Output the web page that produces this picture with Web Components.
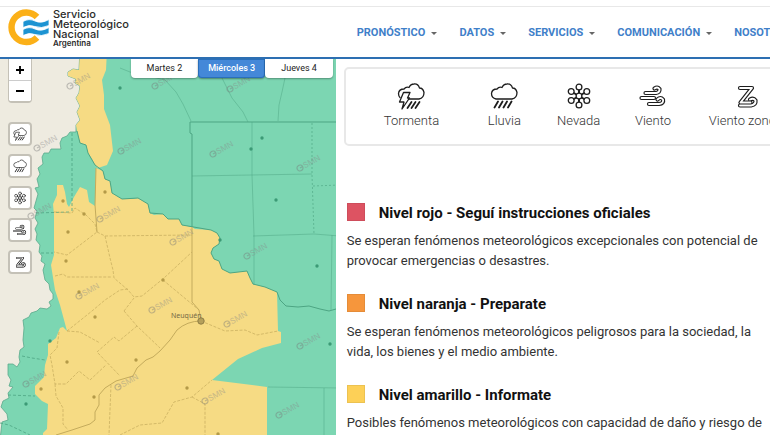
<!DOCTYPE html>
<html lang="es">
<head>
<meta charset="utf-8">
<title>Servicio Meteorológico Nacional</title>
<style>
body{margin:0;background:#fff;font-family:Roboto,"Liberation Sans",sans-serif;color:#333}
</style>
</head>
<body>
<smn-page></smn-page>
<script>
const define = (name, html, setup) => {
  const t = document.createElement('template');
  t.innerHTML = html;
  customElements.define(name, class extends HTMLElement {
    connectedCallback() {
      if (this.shadowRoot) return;
      this.attachShadow({mode: 'open'}).append(t.content.cloneNode(true));
      if (setup) setup(this, this.shadowRoot);
    }
  });
};

const cloud = 'M13 17H22Q27 16 27 10.500Q26 6 22.500 6Q21 1.500 17 2Q13.500 2 12 5.500Q9 4.500 7 7Q2 7 1.500 11.500Q1.500 16 6 17H13';
const tubes = (...d) => d.map(p => `<path d="${p}" stroke-width="4.200"/>`).join('') +
  d.map(p => `<path d="${p}" stroke="#fff" stroke-width="1.900"/>`).join('');
const flake = () => {
  let lines = '', dots = '';
  for (let i = 0; i < 6; i++) {
    const a = Math.PI / 3 * i + Math.PI / 2;
    const x = 14 + 9 * Math.cos(a), y = 14 + 9 * Math.sin(a);
    lines += `<path stroke-width="2" d="M14 14L${x} ${y}"/>`;
    dots += `<circle cx="${x}" cy="${y}" r="2.900" fill="#fff"/>`;
  }
  return lines + dots + '<circle cx="14" cy="14" r="2.900" fill="#fff"/>';
};
const icons = {
  tormenta: `<path d="M11 17H22Q27 16 27 10.500Q26 6 22.500 6Q21 1.500 17 2Q13.500 2 12 5.500Q9 4.500 7 7Q2 7 1.500 11.500Q1.500 14 3 15.500"/>
    <path fill="#fff" d="M6.500 10.500H13L10.500 16H12.500L5 27L7 20H2.500Z"/><path stroke-width="1.800" d="M14.500 20L10.500 26M18.500 20L14.500 26M22.500 20L18.500 26"/>`,
  lluvia: `<path d="${cloud}"/><path stroke-width="1.800" d="M8 19.500L4.500 25.500M12.500 19.500L9 25.500M17 19.500L13.500 25.500M21.500 19.500L18 25.500"/>`,
  nevada: flake(),
  viento: tubes('M6.500 11H17Q20.800 10.500 20.500 7Q18.500 4.500 15.500 6.500', 'M2.500 16H15', 'M10 22H20Q25 21.500 24 17.500Q21.500 14.500 18.500 17.500'),
  zonda: tubes('M8 23.500H19Q24 22.500 23.500 18.500Q21.500 15.500 18 17.500', 'M8 6H20L8.500 20.500H18.500')
};
define('alert-icon', `<style>:host{display:block;width:28px;height:28px}svg{display:block;width:100%;height:100%}</style>
<svg viewBox="0 0 28 28" fill="none" stroke="#1d1d1d" stroke-width="1.300" stroke-linecap="round" stroke-linejoin="round" aria-hidden="true"></svg>`,
  (el, r) => { r.querySelector('svg').innerHTML = icons[el.getAttribute('name')]; });

define('smn-logo', `<style>
:host{display:block}
a{display:flex;gap:4px;color:#2b2b2b;text-decoration:none;font-family:Inter,sans-serif}
svg{width:42px;height:38px;display:block}
.t{font-size:11px;line-height:10px;font-weight:500;white-space:nowrap}
small{display:block;font-size:8px;line-height:9px;font-weight:600}
</style>
<a href="#"><svg viewBox="0 0 42 38" aria-hidden="true">
<path d="M30 8A14.800 14.800 0 1 0 30 28.500" fill="none" stroke="#fbb018" stroke-width="6.400"/>
<path d="M16 12.500Q22 9 28 12T42 10.500V16.500Q34 20 28 17.500T16 18.500ZM16 20.500Q22 17 28 20T42 18.500V24.500Q34 28 28 25.500T16 26.500Z" fill="#1c93d2" stroke="#fff" stroke-width=".8"/></svg>
<span class="t">Servicio<br>Meteorológico<br>Nacional<small>Argentina</small></span></a>`);

define('nav-item', `<style>
:host{display:block}
a{display:flex;align-items:center;gap:6px;color:#3f80c9;font-size:11px;line-height:16px;font-weight:700;text-decoration:none;white-space:nowrap}
i{border:3px solid transparent;border-top-color:#666;border-bottom:0;margin-top:2px}
</style><a href="#"><span><slot></slot></span><i></i></a>`);

define('site-header', `<style>
:host{display:grid;grid-template-columns:43.6% minmax(0,1fr);box-sizing:border-box;height:59px;border-bottom:2px solid #2d6fb2;background:linear-gradient(#fff 6px,#e8e8e8 6px,#e8e8e8 7px,#fff 7px);position:relative;z-index:2}
smn-logo{padding:9px 0 0 7px}
nav{display:flex;gap:22px;align-items:center;padding:8px 0 0 21px;overflow:hidden}
nav-item{flex:none}
</style>
<smn-logo></smn-logo>
<nav><nav-item>PRONÓSTICO</nav-item><nav-item>DATOS</nav-item><nav-item>SERVICIOS</nav-item><nav-item>COMUNICACIÓN</nav-item><nav-item>NOSOTROS</nav-item></nav>`);

define('map-button', `<style>
:host{display:block}
button{box-sizing:border-box;width:24px;height:24px;padding:0;border:2px solid #c4c1b7;border-radius:4px;background:#fff;display:grid;place-items:center}
alert-icon{width:14px;height:14px}
</style><button type="button"></button>`,
  (el, r) => {
    const b = r.querySelector('button'), ic = document.createElement('alert-icon');
    ic.setAttribute('name', el.getAttribute('name'));
    b.setAttribute('aria-label', el.getAttribute('label'));
    b.append(ic);
  });

define('zoom-control', `<style>
:host{display:block;box-sizing:border-box;width:24px;border:1px solid #c4c1b7;border-width:0 1px 2px;border-radius:0 0 4px 4px;background:#fff;overflow:hidden}
button{display:grid;place-items:center;width:100%;height:21px;border:0;padding:0;background:#fff}
button+button{border-top:1px solid #ccc}
svg{width:10px;height:10px}
</style>
<button type="button" aria-label="Acercar"><svg viewBox="0 0 10 10"><path d="M1 5H9M5 1V9" stroke="#000" stroke-width="1.800"/></svg></button>
<button type="button" aria-label="Alejar"><svg viewBox="0 0 10 10"><path d="M1 5H9" stroke="#000" stroke-width="1.800"/></svg></button>`);

define('day-tabs', `<style>
:host{display:grid;grid-template-columns:repeat(3,1fr);width:202px}
button{height:19px;border:0;border-radius:0 0 4px 4px;background:#fff;color:#222;font:400 9px/16px Roboto,sans-serif;padding:0 0 2px;box-shadow:0 1px 2px #0005}
button[aria-pressed=true]{background:#4488d8;color:#fff;font-weight:500;box-shadow:inset 0 0 0 1px #2a6fba,0 1px 2px #0006}
</style>
<button type="button" aria-pressed="false">Martes 2</button><button type="button" aria-pressed="true">Miércoles 3</button><button type="button" aria-pressed="false">Jueves 4</button>`);

define('alert-map', `<style>
:host{display:block;position:relative;overflow:hidden;background:#eeebe0}
.map{position:absolute;inset:0;width:100%;height:100%}
.tools{position:absolute;left:8px;top:0;display:grid;gap:8px}
zoom-control{margin-bottom:11px}
day-tabs{position:absolute;right:3px;top:0}
</style>
<svg class="map" viewBox="0 59 336 376" preserveAspectRatio="xMinYMin slice" role="img" aria-label="Mapa de alertas">
<path fill="#7cd6b2" stroke="#5aa98b" stroke-width=".8" d="M80 50L79 70L73 69L68 72L68 76L76 79L75 83L80 86L79 93L76 98L80 106L77 112L80 120L76 125L76 132L70 132L67 136L62 138L60 143L61 149L55 149L51 149L49 153L44 153L42 157L43 164L38 168L40 174L37 179L39 187L35 188L38 194L36 201L34 208L37 211L35 218L38 223L35 229L37 234L36 240L40 245L39 252L42 256L41 261L45 264L43 270L45 280L49 284L50 290L53 294L53 299L49 302L51 306L47 309L40 308L37 311L31 313L29 317L23 320L24 328L23 340L24 347L20 350L19 357L20 362L17 367L13 364L8 364L8 375L11 380L9 386L13 387L8 393L9 398L3 401L1 407L7 414L8 420L2 422L0 440H340V50Z"/>
<path fill="#f6db84" d="M80 50L79 70L73 69L68 72L68 76L76 79L75 83L80 86L79 93L76 98L80 106L77 112L80 120L76 125L77 131L80 143L86 145L88 153L92 159L95 165L98 168L107 165L113 151L110 125L104 109L104 95L102 80L106 70L107 50Z"/>
<path fill="#f6db84" d="M96 168L103 171L105 179L110 181L112 193L122 199L133 199L138 198L148 204L150 213L154 215L163 214L168 219L179 219L182 225L192 227L195 229L211 230L217 233L220 238L219 244L213 248L211 253L214 259L219 261L222 269L230 273L247 271L250 278L253 284L265 287L277 292L278 331L281 332V343L262 348L238 359L212 380L267 387L267 440H43V433L47 429L48 404L42 401L35 394V386L44 377L45 365L48 355V344L56 338L60 328L63 327L67 331L60 305L55 290L51 265L54 255V215L53 204L57 195V185H63L65 192L67 204L69 207L74 197L80 187L87 190L89 202L95 206Z"/>
<g fill="none" stroke="#4da583" stroke-width=".8">
<path stroke-width="1" d="M340 122H190V133L192 134V227M77 131L80 143L86 145L88 153L95 165L103 171L105 179L110 181L112 193L122 199L138 198L148 204L150 213L163 214L168 219L179 219L182 225L211 230L217 233L220 238L219 244L213 248L211 253L214 259L219 261L222 269L230 273L247 271L250 278L253 284L265 287L277 292L280 300L286 306L298 307L309 306L320 309L329 311L336 309"/>
<path d="M285 78L282 92L279 105L278 121M222 78L232 98L243 112L248 122M120 68Q130 73 140 74L165 80L176 92L183 104L191 121M252 122V175L254 235V285M192 176L312 174M253 236L314 234L340 236M332 235L331 310M268 387L340 388M324 388V435" opacity=".6"/>
<path d="M312 123V175L314 234M313 186L340 185" stroke-dasharray="2 2" opacity=".8"/>
<path d="M72 133V213M22 356L32 358L45 360M36 213L70 212M41 253L53 253M8 395L35 396M0 423L9 425L30 435" stroke-dasharray="3 2"/>
</g>
<g fill="none" stroke="#c4ab5c" stroke-width=".7">
<path stroke-width="1" d="M96 168L95 205L97 232M192 227V302L199 310L201 321M201 321Q187 321 177 330L170 340L160 351L153 357L146 360L137 368L133 376L116 381L105 388L99 395L99 405L95 412V420L90 424L72 430L56 435"/>
<path d="M54 212L72 213L75 208L86 215L95 224L97 232L67 255L54 252M97 232L105 236L192 235M105 236L110 258L113 270L114 278L128 290L134 297L142 296L164 278L192 252M55 276L63 274L67 277L112 277M67 331L92 311L105 300L120 290L128 289M124 311L134 298M124 311L137 326L160 348M137 326L119 341L114 337L97 352L120 376M67 331L80 332L100 343M59 332L57 348L50 355L52 365L55 384L66 384L79 371L90 380L106 365M55 384L56 396L63 408V424L68 430M111 385L109 435M120 435L140 425L162 423L174 402L192 397L212 380M192 397L205 404V435M163 280L199 310M201 321L225 331L245 330L257 335L278 331" stroke-dasharray="3 1.500"/>
</g>
<circle cx="201" cy="321" r="3.200" fill="#b5a05b" stroke="#8f7e45"/>
<text x="171" y="318" font-family="Noto Sans" font-size="7" fill="#776a44">Neuquén</text>
<g id="dots"></g><g id="marks"></g>
</svg>
<div class="tools"><zoom-control></zoom-control>
<map-button name="tormenta" label="Tormenta"></map-button><map-button name="lluvia" label="Lluvia"></map-button><map-button name="nevada" label="Nevada"></map-button><map-button name="viento" label="Viento"></map-button><map-button name="zonda" label="Viento zonda"></map-button></div>
<day-tabs></day-tabs>`,
  (el, r) => {
    const green = [[120,88],[251,149],[262,138],[276,200],[220,240],[317,266],[330,344],[50,341],[26,404]];
    const gold = [[63,201],[84,214],[105,192],[68,232],[66,261],[163,280],[95,317],[67,362],[136,360],[94,397],[41,389],[187,388],[218,434],[79,292]];
    r.querySelector('#dots').innerHTML = green.map(([x, y]) => `<circle cx="${x}" cy="${y}" r="1.700" fill="#3c9a76"/>`).join('') +
      gold.map(([x, y]) => `<circle cx="${x}" cy="${y}" r="1.700" fill="#b49a48"/>`).join('');
    const marks = [[70,86],[155,86],[230,89],[37,148],[121,151],[213,154],[300,168],[31,216],[100,219],[173,242],[247,256],[79,296],[152,310],[227,324],[300,346],[118,387],[26,384],[205,401],[279,415]];
    r.querySelector('#marks').innerHTML = marks.map(([x, y]) => `<g transform="translate(${x} ${y}) rotate(-30)" opacity=".42"><circle r="3" fill="none" stroke="#777" stroke-width="1.200"/><path d="M0 0H3" stroke="#777"/><text x="4" y="3" font-family="Inter" font-size="8" fill="#888">SMN</text></g>`).join('');
  });

define('legend-item', `<style>
:host{display:grid;justify-items:center;gap:2px;font-size:13px;line-height:18px;font-weight:300;color:#333;white-space:nowrap}
</style><alert-icon></alert-icon><span><slot></slot></span>`,
  (el, r) => {
    const ic = document.createElement('alert-icon');
    ic.setAttribute('name', el.getAttribute('name'));
    r.querySelector('alert-icon').replaceWith(ic);
  });

define('alert-legend', `<style>
:host{display:grid;grid-template-columns:3fr 2fr 2fr 2fr 3fr;box-sizing:border-box;border:2px solid #e8e8e8;border-radius:5px;padding:13px 9px 14px 10px}
</style>
<legend-item name="tormenta">Tormenta</legend-item><legend-item name="lluvia">Lluvia</legend-item><legend-item name="nevada">Nevada</legend-item><legend-item name="viento">Viento</legend-item><legend-item name="zonda">Viento zonda</legend-item>`);

define('alert-level', `<style>
:host{display:block}
header{display:flex;gap:14px;align-items:center}
i{box-sizing:border-box;width:18px;height:18px;margin-bottom:2px;background:var(--level);border:1px solid #0001}
h2{margin:0;font-size:15px;line-height:20px;font-weight:700;color:#111}
p{margin:8px 0 0;font-size:13px;line-height:20px;color:#333}
</style><header><i></i><h2><slot name="title"></slot></h2></header><p><slot></slot></p>`);

define('smn-page', `<style>
:host{display:flex;flex-direction:column;height:100vh;overflow:hidden}
main{flex:1;min-height:0;display:grid;grid-template-columns:43.6% minmax(0,1fr)}
section{overflow:hidden;padding:8px 0 0 8px}
alert-legend{width:110%}
.levels{display:grid;gap:23px;padding:57px 0 0 3px}
</style>
<site-header></site-header>
<main><alert-map></alert-map>
<section><alert-legend></alert-legend>
<div class="levels">
<alert-level style="--level:#dd5362"><span slot="title">Nivel rojo - Seguí instrucciones oficiales</span>Se esperan fenómenos meteorológicos excepcionales con potencial de provocar emergencias o desastres.</alert-level>
<alert-level style="--level:#f6963c"><span slot="title">Nivel naranja - Preparate</span>Se esperan fenómenos meteorológicos peligrosos para la sociedad, la vida, los bienes y el medio ambiente.</alert-level>
<alert-level style="--level:#fdd057"><span slot="title">Nivel amarillo - Informate</span>Posibles fenómenos meteorológicos con capacidad de daño y riesgo de</alert-level>
</div></section></main>`);
</script>
</body>
</html>
